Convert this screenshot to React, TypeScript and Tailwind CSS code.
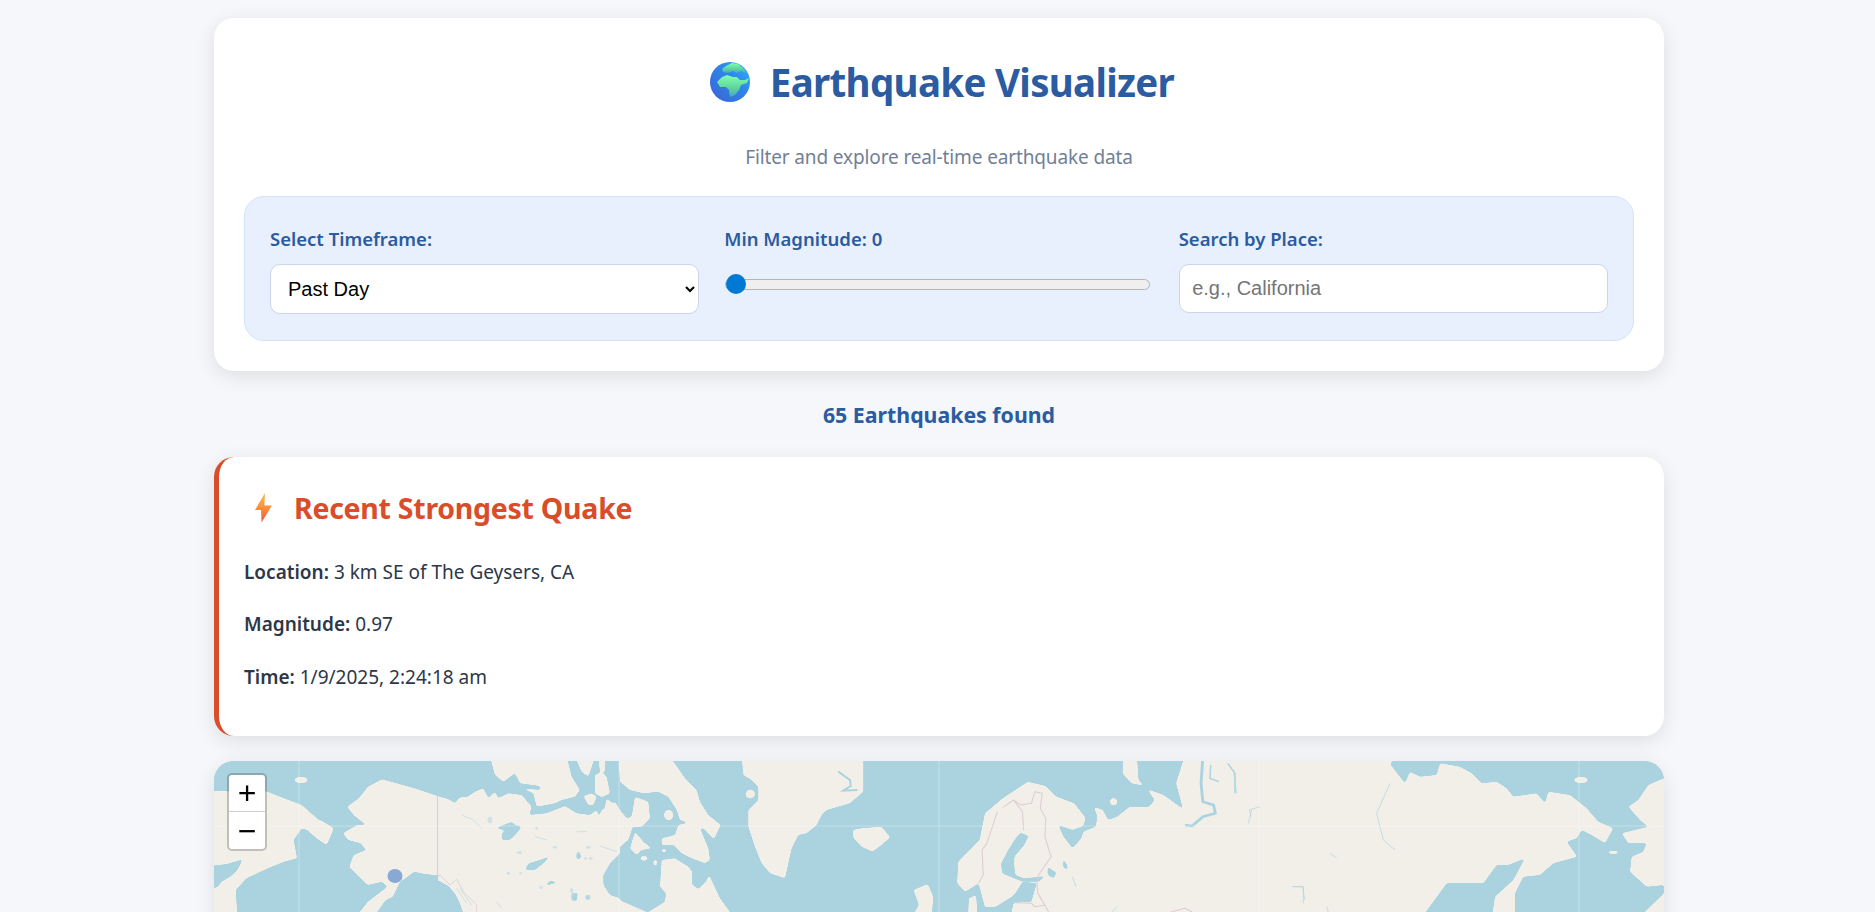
import React from 'react';

const Globe = () => (
  <svg width="40" height="40" viewBox="0 0 40 40" className="shrink-0">
    <defs>
      <linearGradient id="sea" x1="0" y1="1" x2="1" y2="0">
        <stop offset="0" stopColor="#3b62d4" />
        <stop offset="0.6" stopColor="#2f86ea" />
        <stop offset="1" stopColor="#2fb6ff" />
      </linearGradient>
      <linearGradient id="land" x1="0.5" y1="0" x2="0.5" y2="1">
        <stop offset="0" stopColor="#7fffb4" />
        <stop offset="0.6" stopColor="#5fd39a" />
        <stop offset="1" stopColor="#46a6cf" />
      </linearGradient>
    </defs>
    <circle cx="20" cy="20" r="20" fill="url(#sea)" />
    <path d="M12 7 L16 4 L22 1 L28 2 L33 6 L37 11 L31 9 L27 11 L23 9 L18 11 L13 10Z" fill="url(#land)" />
    <path d="M7 20 L12 15 L17 13 L23 15 L27 15 L30 18 L35 18 L39 16 L37 21 L31 23 L29 28 L25 33 L20 35 L19 28 L16 25 L10 25Z" fill="url(#land)" />
  </svg>
);

const Bolt = () => (
  <svg width="17" height="30" viewBox="0 0 17 30" className="shrink-0">
    <defs>
      <linearGradient id="bolt" x1="0.5" y1="0" x2="0.5" y2="1">
        <stop offset="0" stopColor="#ffb84a" />
        <stop offset="0.55" stopColor="#fb8a3c" />
        <stop offset="1" stopColor="#ef4f45" />
      </linearGradient>
    </defs>
    <path d="M10 0 L0 17 L6 17 L6.6 29.5 L16.8 12.6 L9.4 12.6Z" fill="url(#bolt)" />
  </svg>
);

const WATER = '#aad3df';
const LAND = '#f2efe9';
const BORDER = '#dccdd2';

// each group is traced from a crop of the map, so its numbers are crop pixels
const WEST = 'translate(200 750) scale(0.35714 0.33333)';
const CANADA = 'translate(440 760) scale(0.33333)';
const ARCTIC = 'translate(560 760) scale(0.33333)';
const EUROPE = 'translate(760 750) scale(0.35714 0.33333)';
const SIBERIA = 'translate(1220 750) scale(0.33333)';

const WorldMap = () => (
  <svg width="1450" height="151" viewBox="214 761 1450 151" className="block blur-[0.4px]">
    <defs>
      <filter id="smooth" filterUnits="userSpaceOnUse" x="190" y="730" width="1500" height="220" colorInterpolationFilters="sRGB">
        <feGaussianBlur stdDeviation="1" />
        <feComponentTransfer>
          <feFuncA type="linear" slope="6" intercept="-2.5" />
        </feComponentTransfer>
      </filter>
    </defs>
    <rect x="214" y="761" width="1450" height="151" fill={WATER} />

    <g filter="url(#smooth)" fill={LAND}>
      <g transform={WEST}>
        <path d="M10 122 L110 125 185 124 235 145 285 165 330 208 345 215 375 235 355 285 330 268 300 240 285 235 262 270 272 325 235 335 190 355 130 385 100 420 105 510 10 510Z" />
        <ellipse cx="283" cy="90" rx="19" ry="10" />
        <path d="M510 88 L550 100 600 115 665 138 700 150 700 400 665 376 630 372 600 365 575 385 560 395 540 440 520 450 480 510 430 510 470 455 525 410 510 395 470 405 440 375 418 350 430 315 465 300 450 280 415 270 400 250 440 225 465 225 430 195 412 170 445 145 470 110Z" />
      </g>
      <g transform={CANADA}>
        <path d="M-5 110 L25 118 45 130 60 112 80 112 105 95 130 85 145 115 165 95 175 115 205 100 245 105 275 140 268 165 320 160 345 150 375 138 410 160 450 165 470 150 480 178 495 140 500 115 540 150 540 280 510 310 490 345 490 375 510 405 540 415 560 490 -5 490Z" />
        <path d="M150 -10 L240 -10 225 40 190 65 165 45Z" />
        <path d="M225 40 L235 -10 380 -10 395 50 420 90 405 110 365 120 345 130 290 140 280 100 245 85 300 90 300 78 240 70Z" />
        <path d="M405 -10 L465 -10 445 50 425 35Z" />
      </g>
      <g transform={ARCTIC}>
        <path d="M-20 150 L20 155 60 165 100 165 115 175 125 150 165 125 180 150 200 175 215 170 225 110 265 125 270 175 245 200 218 200 205 240 180 260 165 275 145 295 125 340 130 375 150 410 200 430 260 456 280 490 -20 490Z" />
        <path d="M305 300 L345 295 385 320 397 335 395 372 415 388 438 365 447 345 480 415 510 456 530 490 250 490 265 456 315 425 318 400 300 380Z" />
        <path d="M175 -10 L330 -10 375 55 410 90 420 125 445 165 482 195 462 238 430 205 395 208 378 186 360 180 350 150 325 110 295 95 250 100 210 90 180 65Z" />
        <path d="M305 235 L345 225 355 195 378 190 395 210 420 205 445 265 450 300 435 310 395 295 365 280 340 255 305 255Z" />
        <path d="M225 215 L250 245 275 265 245 270 230 285 210 265Z" />
        <ellipse cx="326" cy="165" rx="14" ry="16" />
        <ellipse cx="252" cy="295" rx="11" ry="7" />
        <ellipse cx="286" cy="308" rx="6" ry="9" />
        <ellipse cx="312" cy="272" rx="8" ry="5" />
        <path d="M105 45 L125 35 140 50 150 100 125 112 105 100Z" />
        <path d="M70 108 L95 100 110 110 100 135 85 135Z" />
        <path d="M115 -10 L135 -10 135 35 120 35Z" />
        <path d="M545 -10 L910 -10 910 95 870 130 800 150 785 165 770 195 740 220 715 225 695 265 685 310 675 355 630 340 605 310 585 260 565 200 565 150 595 120 595 80 575 60 550 45Z" />
      </g>
      <g transform={EUROPE}>
        <path d="M260 240 L285 235 340 230 365 262 340 285 315 305 285 290 262 265Z" />
        <path d="M430 420 L470 402 485 440 480 510 420 510 445 465Z" />
        <path d="M585 445 L605 435 610 510 582 510Z" />
        <path d="M630 190 L680 145 750 95 800 108 830 140 880 160 912 205 905 228 875 240 835 225 850 260 875 295 900 265 905 245 940 230 945 200 935 170 960 180 975 210 1000 200 1035 170 1090 170 1105 150 1085 118 1130 135 1185 178 1165 100 1190 15 1640 15 1640 510 700 510 710 458 760 455 775 400 735 395 715 430 705 440 660 470 630 472 612 400 575 425 552 400 555 335 615 270Z" />
        <path d="M1018 15 L1055 15 1060 90 1075 107 1040 100 1015 70Z" />
        <ellipse cx="990" cy="155" rx="10" ry="11" />
      </g>
      <g transform={SIBERIA}>
        <path d="M250 15 L535 15 510 42 555 100 570 65 600 80 650 75 660 40 720 50 755 70 785 100 830 95 860 115 880 140 950 130 975 160 985 125 1050 135 1100 175 1135 215 1180 235 1155 280 1115 255 1085 240 1070 265 1040 275 1072 320 1000 340 960 375 910 380 885 430 885 510 815 510 825 440 880 390 915 325 865 345 830 345 790 400 680 400 600 510 250 510Z" />
        <ellipse cx="1083" cy="90" rx="21" ry="10" />
        <ellipse cx="1180" cy="307" rx="16" ry="5" />
        <path d="M1360 85 L1332 85 1285 105 1255 150 1225 170 1262 212 1285 230 1245 240 1205 250 1225 280 1280 280 1270 305 1235 320 1230 365 1280 410 1332 405 1332 430 1250 510 1360 510Z" />
      </g>
    </g>

    <g filter="url(#smooth)" fill={WATER}>
      <path transform={WEST} d="M10 350 L75 342 120 328 105 360 85 380 60 395 50 410 10 425Z" />
      <g transform={CANADA}>
        <path d="M-10 358 L25 378 45 400 60 430 80 490 -10 490Z" />
        <path d="M165 205 L215 185 225 195 245 200 230 220 210 240 185 240 185 222 195 210Z" />
        <path d="M255 330 L265 310 300 300 332 288 310 310 285 330Z" />
        <path d="M312 380 L330 362 360 368 335 372Z" />
        <path d="M408 288 L418 275 424 292 412 300Z" />
        <path d="M398 420 L405 395 413 400 410 425Z" />
      </g>
      <g transform={ARCTIC}>
        <path d="M552 90 L585 82 592 110 570 120 552 108Z" />
      </g>
      <g transform={EUROPE}>
        <path d="M730 248 L752 258 740 285 712 320 712 350 715 375 740 385 800 378 780 395 735 395 700 380 678 370 675 340 695 300 715 265Z" />
        <path d="M805 350 L830 368 822 385 805 375Z" />
        <path d="M848 325 L860 345 862 362 848 350Z" />
      </g>
    </g>

    {/* things the smoothing would eat: disko, rivers, small lakes, borders */}
    <ellipse transform={ARCTIC} cx="571" cy="102" rx="14" ry="13" fill={LAND} />
    <g transform={ARCTIC} fill="none" stroke={WATER} strokeWidth="6">
      <path d="M835 35 L870 60 872 78 850 92 892 90" />
    </g>
    <g transform={ARCTIC} fill={WATER} opacity="0.8">
      <ellipse cx="55" cy="285" rx="6" ry="9" />
      <ellipse cx="40" cy="410" rx="7" ry="12" />
      <ellipse cx="82" cy="412" rx="6" ry="7" />
    </g>
    <g transform={CANADA} fill={WATER} opacity="0.5">
      <ellipse cx="238" cy="278" rx="8" ry="4" />
      <ellipse cx="345" cy="262" rx="6" ry="4" />
      <ellipse cx="205" cy="340" rx="5" ry="4" />
      <ellipse cx="242" cy="340" rx="5" ry="3" />
      <ellipse cx="445" cy="262" rx="8" ry="4" />
      <ellipse cx="436" cy="295" rx="4" ry="4" />
      <ellipse cx="452" cy="295" rx="6" ry="4" />
      <ellipse cx="445" cy="412" rx="7" ry="8" />
      <ellipse cx="303" cy="382" rx="5" ry="5" />
      <ellipse cx="150" cy="180" rx="7" ry="10" />
      <ellipse cx="290" cy="205" rx="4" ry="4" />
      <ellipse cx="395" cy="392" rx="5" ry="7" />
    </g>
    <g transform={CANADA} fill="none" stroke={WATER} strokeWidth="3" opacity="0.5">
      <path d="M65 165 L100 180 125 205 M480 258 L530 275 M285 230 L320 240 M410 215 L440 215 M170 425 L185 445 M50 385 L80 430 M60 385 L95 435" />
    </g>
    <g transform={EUROPE} fill="none" stroke={WATER}>
      <path strokeWidth="8" strokeLinejoin="round" d="M1240 20 L1235 100 1240 155 1270 165 1275 190 1240 200 1210 228 1190 225" />
      <path strokeWidth="4" strokeLinejoin="round" d="M1262 45 L1260 85 1285 95 M1310 40 L1330 70 1330 130" />
      <path strokeWidth="2" d="M1375 200 L1370 180 1400 170 M1490 410 L1520 410 1525 450 M1000 470 L985 486 M875 380 L885 410" />
    </g>
    <path transform={SIBERIA} fill="none" stroke={WATER} strokeWidth="2" d="M510 100 L470 190 490 270 525 300 M40 60 L50 130 M95 180 L85 220 M330 310 L350 325 M220 410 L250 410 250 460 M320 470 L325 486" />
    <path transform={CANADA} fill="none" stroke={BORDER} strokeWidth="2.5" d="M0 345 L30 375 50 358 70 395 110 435 110 490" />
    <path transform={WEST} fill="none" stroke={BORDER} strokeWidth="3" d="M665 138 L665 376 672 378" />
    <path transform={EUROPE} fill="none" stroke={BORDER} strokeWidth="3" d="M665 185 L635 280 622 300 625 375 612 400 M680 172 L710 150 735 185 738 240 M710 150 L730 165 760 160 770 125 790 130 785 175 800 205 798 260 815 320 780 375 775 395 778 430 800 470 808 486 M710 458 L760 460 770 470 800 465 M1150 486 L1190 475 1210 486" />

    {/* tile seams */}
    <path fill="none" stroke="#ffffff" strokeOpacity="0.3" strokeWidth="1" d="M299 761 V912 M619 761 V912 M939 761 V912 M1259 761 V912 M1579 761 V912 M214 826 H1664" />

    <circle transform={WEST} cx="546" cy="378" r="21" fill="#2f6fc0" fillOpacity="0.55" />
  </svg>
);

export default function App() {
  return (
    <div className="h-screen overflow-hidden bg-[#f5f7fb] pl-[3px] pt-[18px] font-['Noto_Sans',sans-serif] text-[#2d3748]">
      <div className="mx-auto w-[1450px]">
        <div className="rounded-[20px] bg-white px-[30px] pb-[30px] pt-[37px] shadow-[0_5px_20px_rgba(0,0,0,0.1)]">
          <h1 className="flex h-[54px] items-center justify-center gap-[20px] pl-[6px] text-[38.5px] font-bold leading-[54px] tracking-[-0.7px] text-[#2b5ba0]">
            <Globe />
            Earthquake Visualizer
          </h1>
          <p className="mt-[34px] text-center text-[19px] leading-[28px] tracking-[-0.13px] text-[#718096]">
            Filter and explore real-time earthquake data
          </p>
          <div className="mt-[25px] grid grid-cols-3 gap-[25px] rounded-[20px] border border-[#d2e3fc] bg-[#e8f0fe] px-[25px] pb-[26px] pt-[25px]">
            <div>
              <label className="mb-[8px] block text-[18.5px] font-semibold leading-[34px] text-[#2b5ba0]">Select Timeframe:</label>
              <select className="h-[50px] w-full rounded-[10px] border border-[#cbd5e8] bg-white pl-[13px] pr-[1px] font-['Liberation_Sans',sans-serif] text-[20px] text-black">
                <option>Past Day</option>
                <option>Past Week</option>
                <option>Past Hour</option>
              </select>
            </div>
            <div>
              <label className="mb-[8px] block text-[18.5px] font-semibold leading-[34px] text-[#2b5ba0]">Min Magnitude: 0</label>
              <input
                type="range"
                min={0}
                max={10}
                defaultValue={0}
                className="ml-[1px] mt-[22.5px] block h-[11px] w-[425px] appearance-none rounded-[6px] border border-[#b5b5b5] bg-[#efefef] [&::-webkit-slider-thumb]:h-[20px] [&::-webkit-slider-thumb]:w-[20px] [&::-webkit-slider-thumb]:appearance-none [&::-webkit-slider-thumb]:rounded-full [&::-webkit-slider-thumb]:bg-[#0078d4]"
              />
            </div>
            <div>
              <label className="mb-[8px] block text-[18.5px] font-semibold leading-[34px] text-[#2b5ba0]">Search by Place:</label>
              <input
                type="text"
                placeholder="e.g., California"
                className="h-[49px] w-full rounded-[10px] border border-[#cbd5e8] bg-white px-[12.5px] font-['Liberation_Sans',sans-serif] text-[20px] placeholder:text-[#757575]"
              />
            </div>
          </div>
        </div>

        <div className="mt-[29px] text-center text-[21.3px] font-bold leading-[30px] text-[#2b5ba0]">65 Earthquakes found</div>

        <div className="mt-[27px] rounded-[20px] border-l-[5px] border-[#d94d2a] bg-white pb-[45px] pl-[25px] pt-[30px] shadow-[0_5px_20px_rgba(0,0,0,0.1)]">
          <h2 className="flex h-[42px] items-center gap-[22px] pl-[11px] text-[28.5px] font-bold leading-[42px] tracking-[-0.27px] text-[#d94d2a]">
            <Bolt />
            Recent Strongest Quake
          </h2>
          <p className="mt-[29px] text-[19px] leading-[28px]"><strong className="font-semibold">Location:</strong> 3 km SE of The Geysers, CA</p>
          <p className="mt-[24px] text-[19px] leading-[28px]"><strong className="font-semibold">Magnitude:</strong> 0.97</p>
          <p className="mt-[25px] text-[19px] leading-[28px]"><strong className="font-semibold">Time:</strong> 1/9/2025, 2:24:18 am</p>
        </div>

        <div className="relative mt-[25px] h-[600px] overflow-hidden rounded-[20px] bg-[#aad3df] shadow-[0_5px_20px_rgba(0,0,0,0.1)]">
          <WorldMap />
          <div className="absolute left-[13px] top-[12px] w-[40px] overflow-hidden rounded-[5px] border-[2px] border-black/20 bg-white bg-clip-padding font-['Liberation_Sans',sans-serif] text-black">
            <div className="flex h-[37px] items-center justify-center border-b border-[#cccccc] text-[32px] leading-none">+</div>
            <div className="flex h-[37px] items-center justify-center text-[32px] leading-none">−</div>
          </div>
        </div>
      </div>
    </div>
  );
}
